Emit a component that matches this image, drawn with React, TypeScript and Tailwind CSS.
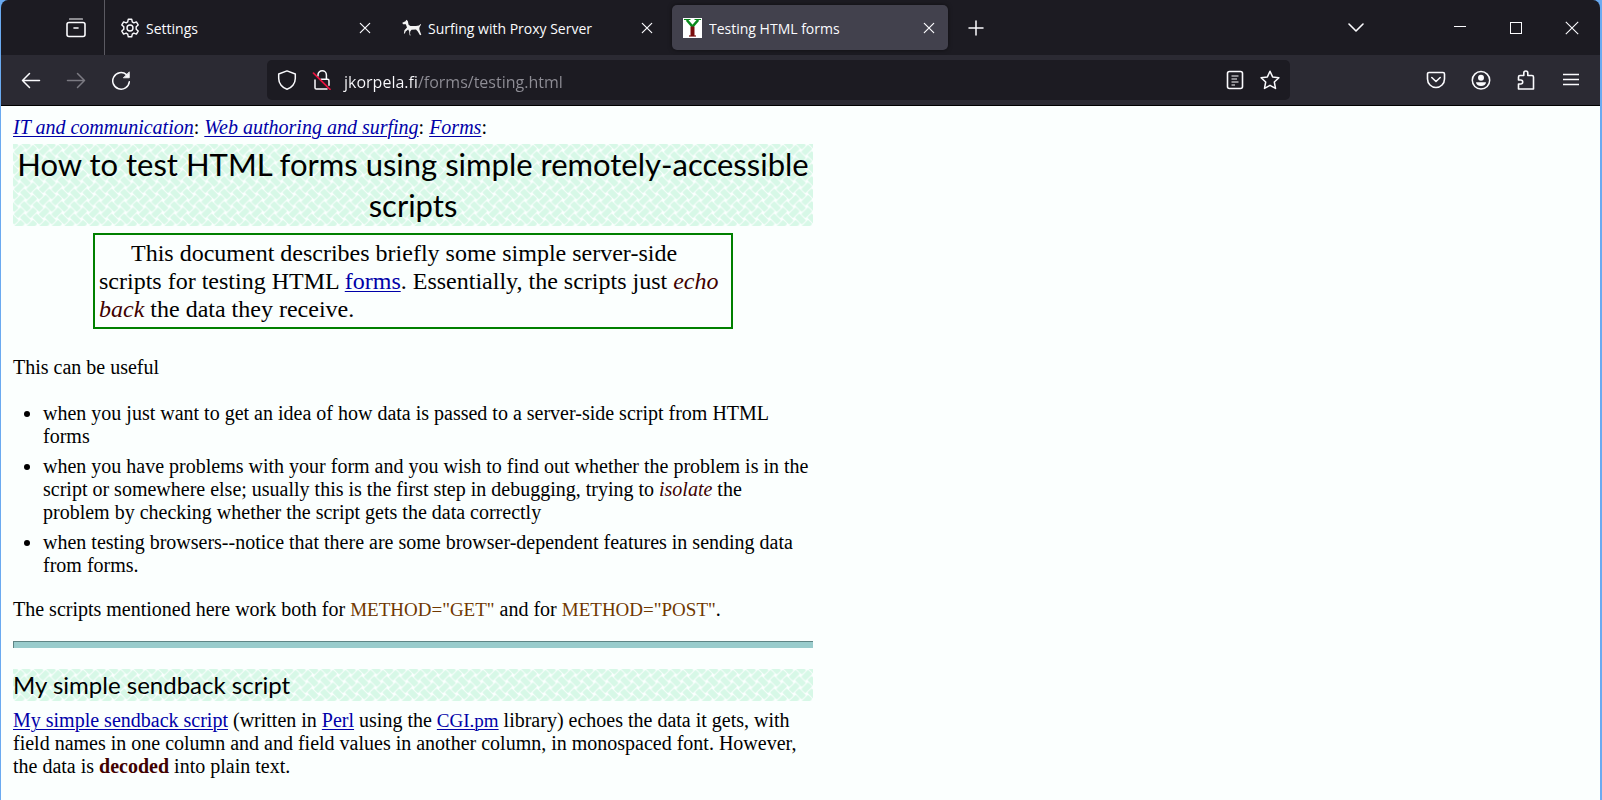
import type { ReactNode, SVGProps } from "react";

const UI_FONT = "font-['Open_Sans','Noto_Sans',sans-serif]";

function Icon({ children, ...rest }: SVGProps<SVGSVGElement>) {
  return (
    <svg
      width="20"
      height="20"
      viewBox="0 0 20 20"
      fill="none"
      stroke="currentColor"
      strokeWidth="1.5"
      strokeLinecap="round"
      strokeLinejoin="round"
      aria-hidden="true"
      {...rest}
    >
      {children}
    </svg>
  );
}

const GearIcon = () => (
  <Icon className="shrink-0" strokeWidth="1.4">
    <circle cx="10" cy="10" r="3" />
    <path d="M8.3 1.2h3.4l.6 2.7 1.5.9 2.6-.9 1.8 3-2 1.9v2.4l2 1.9-1.8 3-2.6-.9-1.5.9-.6 2.7H8.3l-.6-2.7-1.5-.9-2.6.9-1.8-3 2-1.9V8.8l-2-1.9 1.8-3 2.6.9 1.5-.9z" />
  </Icon>
);

const DogIcon = () => (
  <Icon className="shrink-0" stroke="none" fill="#f4f4f4">
    <path d="M.3 4.800 3.500 3.200 4.300 1.800 5.800 3l.8 3.700 1.800 1.300h5.600L17 7.500l1.600-1.500.5.6-1.500 2.300-.3 2.200.5 1.700 1.500 4-1.300.4-2.200-3.600-1.800-2-4.500.2-1.300 1.800-.2 2.600 1.100 1H7.600l-.4-3.800-1-1.800-2.600 1.800-.7 2.200-1-.2.5-3.100L5 9.600 3.800 6.200 1 6.300z" />
  </Icon>
);

const YIcon = () => (
  <svg width="19" height="20" viewBox="0 0 19 20" className="shrink-0" aria-hidden="true">
    <rect width="19" height="20" fill="#fff" />
    <path d="M1 1.500h6.500M11.500 1.500H18" stroke="#0a8a1c" strokeWidth="1.200" />
    <path d="M3.800 2 9.500 8.500 15.200 2" stroke="#0a8a1c" strokeWidth="2.600" fill="none" />
    <path d="M9.500 8.500V18" stroke="#7a0c0c" strokeWidth="4" />
    <path d="M6 18h7" stroke="#7a0c0c" strokeWidth="1.200" />
  </svg>
);

const CloseIcon = () => (
  <Icon width="12" height="12" viewBox="0 0 12 12" strokeWidth="1.200">
    <path d="M1.300 1.300 10.700 10.700M10.700 1.300 1.300 10.700" />
  </Icon>
);

function Tab({ icon, title, active = false }: { icon: ReactNode; title: string; active?: boolean }) {
  return (
    <div
      role="tab"
      aria-selected={active}
      className={
        active
          ? "flex h-[45px] w-[276px] min-w-0 items-center gap-[7px] rounded-[5px] bg-[#42414d] pr-[9px] pl-[11px] shadow-[0_0_4px_rgba(0,0,0,0.5)]"
          : "flex h-[45px] w-[276px] min-w-0 items-center gap-[6px] rounded-[5px] pr-[9px] pl-3"
      }
    >
      {icon}
      <span className="min-w-0 flex-1 truncate pt-0.5 text-sm">{title}</span>
      <button type="button" aria-label={"Close " + title} className="flex h-5 w-5 items-center justify-center">
        <CloseIcon />
      </button>
    </div>
  );
}

function ToolButton({ label, children, dim = false }: { label: string; children: ReactNode; dim?: boolean }) {
  return (
    <button
      type="button"
      aria-label={label}
      disabled={dim}
      className={
        dim
          ? "flex h-10 w-[45px] shrink-0 items-center justify-center text-[#7b7a82]"
          : "flex h-10 w-[45px] shrink-0 items-center justify-center"
      }
    >
      {children}
    </button>
  );
}

function UrlButton({ label, children }: { label: string; children: ReactNode }) {
  return (
    <button type="button" aria-label={label} className="flex h-10 w-[35px] shrink-0 items-center justify-center">
      {children}
    </button>
  );
}

function TabBar() {
  return (
    <div className="flex h-[55px] items-center bg-[#1c1b22]">
      <div className="flex h-full w-[104px] shrink-0 items-center justify-end border-r border-[#5b5a62] pr-4">
        <button type="button" aria-label="View tabs" className="flex h-6 w-6 items-center justify-center">
          <Icon strokeWidth="1.600">
            <path d="M3.500 1h13" strokeWidth="1.200" />
            <rect x="1" y="4.500" width="18" height="14" rx="2" />
            <path d="M8 10h4" />
          </Icon>
        </button>
      </div>
      <div role="tablist" aria-label="Open tabs" className="ml-[3px] flex min-w-0 gap-[6px]">
        <Tab icon={<GearIcon />} title="Settings" />
        <Tab icon={<DogIcon />} title="Surfing with Proxy Server" />
        <Tab icon={<YIcon />} title="Testing HTML forms" active />
      </div>
      <button type="button" aria-label="New tab" className="ml-2 flex h-10 w-10 shrink-0 items-center justify-center">
        <Icon width="16" height="16" viewBox="0 0 16 16">
          <path d="M8 1v14M1 8h14" />
        </Icon>
      </button>
      <div className="ml-auto flex shrink-0 items-center">
        <button type="button" aria-label="List all tabs" className="mr-12 flex h-10 w-14 items-center justify-center">
          <Icon width="16" height="16" viewBox="0 0 16 16" strokeWidth="1.600">
            <path d="m1 4 7 7 7-7" />
          </Icon>
        </button>
        <button type="button" aria-label="Minimize" className="flex h-10 w-14 items-center justify-center">
          <svg width="12" height="12" viewBox="0 0 12 12" aria-hidden="true">
            <path d="M0 4.500h12" stroke="currentColor" />
          </svg>
        </button>
        <button type="button" aria-label="Maximize" className="flex h-10 w-14 items-center justify-center">
          <svg width="12" height="12" viewBox="0 0 12 12" aria-hidden="true">
            <rect x=".5" y=".5" width="11" height="11" fill="none" stroke="currentColor" />
          </svg>
        </button>
        <button type="button" aria-label="Close window" className="flex h-10 w-14 items-center justify-center">
          <svg width="14" height="14" viewBox="0 0 14 14" aria-hidden="true">
            <path d="m.8.8 12.400 12.400M13.200.8.8 13.200" stroke="currentColor" strokeWidth="1.100" />
          </svg>
        </button>
      </div>
    </div>
  );
}

function Toolbar() {
  return (
    <div className="flex h-[51px] items-center border-b border-black bg-[#2b2a33] px-[7px]">
      <ToolButton label="Back">
        <Icon>
          <path d="M18.500 10.500H1.500M8.500 3.500l-7 7 7 7" />
        </Icon>
      </ToolButton>
      <ToolButton label="Forward" dim>
        <Icon>
          <path d="M1.500 10.500h17M11.500 3.500l7 7-7 7" />
        </Icon>
      </ToolButton>
      <ToolButton label="Reload">
        <Icon>
          <path d="M18.300 11.800A8.300 8.300 0 1 1 15.500 4.600" />
          <path d="M18.300 2.200v5.600h-5.600z" fill="currentColor" strokeWidth=".8" />
        </Icon>
      </ToolButton>
      <div className="mr-[123px] ml-[124px] flex h-10 min-w-0 flex-1 items-center rounded-[5px] bg-[#1c1b22] pr-[3px] pl-[2px]">
        <UrlButton label="Tracking protection">
          <Icon>
            <path d="M10 .9 18.300 4v4.500c0 5-3.600 9.300-8.300 10.700-4.700-1.400-8.300-5.700-8.300-10.700V4z" />
          </Icon>
        </UrlButton>
        <UrlButton label="Connection is not secure">
          <Icon>
            <path d="M6 6V5a4.200 4.200 0 0 1 8.400 0v4.300M9 9.300h6.500a1.500 1.500 0 0 1 1.500 1.500v4.500M3 10v7.700c0 .8.6 1.300 1.300 1.300H15" />
            <path d="M1.500 3.200 18 19.300" stroke="#e8123f" strokeWidth="1.700" />
          </Icon>
        </UrlButton>
        <input
          type="text"
          aria-label="Address"
          defaultValue="jkorpela.fi/forms/testing.html"
          className="h-10 min-w-0 flex-1 bg-[linear-gradient(90deg,#fbfbfe_79px,#8f8e96_79px)] bg-clip-text pt-[3px] pl-[5px] text-base text-transparent outline-none"
        />
        <UrlButton label="Reader view">
          <Icon strokeWidth="1.600">
            <rect x="2.500" y="1.500" width="15" height="17" rx="2" />
            <path d="M6.500 6h7M6.500 9h5.500M6.500 12h7M6.500 15h3.500" strokeWidth="1.200" strokeLinecap="butt" />
          </Icon>
        </UrlButton>
        <UrlButton label="Bookmark this page">
          <Icon>
            <path d="m10 1.200 2.600 5.700 6.300.8-4.600 4.300 1.200 6.400-5.500-3.100-5.500 3.100L5.700 12 1.100 7.700l6.300-.8z" />
          </Icon>
        </UrlButton>
      </div>
      <ToolButton label="Save to Pocket">
        <Icon strokeWidth="1.600">
          <path d="M3 2.500h14a1.500 1.500 0 0 1 1.500 1.500v5a8.500 8.500 0 0 1-17 0V4A1.500 1.500 0 0 1 3 2.500z" />
          <path d="m5.800 7.500 4.200 4 4.200-4" />
        </Icon>
      </ToolButton>
      <ToolButton label="Account">
        <Icon>
          <circle cx="10" cy="10.300" r="8.700" />
          <circle cx="10" cy="7.800" r="3" fill="currentColor" stroke="none" />
          <path d="M5 12.300h10c0 2.200-2.200 3.700-5 3.700s-5-1.500-5-3.700z" fill="currentColor" stroke="none" />
        </Icon>
      </ToolButton>
      <ToolButton label="Extensions">
        <Icon strokeWidth="1.600">
          <path d="M2.500 8.500V7A1.500 1.500 0 0 1 4 5.500h3.800V3a2 2 0 0 1 4 0v2.500H16A1.500 1.500 0 0 1 17.500 7v12h-15v-5h2.200a2 2 0 0 0 0-4H2.500z" />
        </Icon>
      </ToolButton>
      <ToolButton label="Open application menu">
        <svg width="16" height="14" viewBox="0 0 16 14" aria-hidden="true">
          <path d="M0 1.500h16M0 6.500h16M0 11.500h16" stroke="currentColor" strokeWidth="1.400" />
        </svg>
      </ToolButton>
    </div>
  );
}

const BRICKS = [
  { x: 0, y: 0, turn: 45 },
  { x: 12.5, y: 0, turn: 45 },
  { x: 0, y: 12.5, turn: 45 },
  { x: 12.5, y: 12.5, turn: 45 },
  { x: 6.25, y: 6.25, turn: -45 },
];

function Weave({ id }: { id: string }) {
  return (
    <svg className="absolute inset-0 -z-10 h-full w-full" aria-hidden="true">
      <defs>
        <pattern id={id} width="12.5" height="12.5" patternUnits="userSpaceOnUse">
          <rect width="12.5" height="12.5" fill="#fbfffe" />
          {BRICKS.map((b) => (
            <rect
              key={b.x + "-" + b.y}
              x="-4.9"
              y="-3"
              width="9.8"
              height="6"
              rx="1"
              fill="#d7f8e7"
              transform={"translate(" + b.x + " " + b.y + ") rotate(" + b.turn + ")"}
            />
          ))}
        </pattern>
      </defs>
      <rect width="100%" height="100%" fill={"url(#" + id + ")"} />
    </svg>
  );
}

function Link({ children }: { children: ReactNode }) {
  return (
    <a href="#" className="text-[#0000a8] underline decoration-1 underline-offset-2">
      {children}
    </a>
  );
}

function Code({ children }: { children: ReactNode }) {
  return <code className="font-['Liberation_Serif',serif] text-[19px]">{children}</code>;
}

function Article() {
  return (
    <main className="flex-1 bg-[#fbfffe] pt-[10px] pb-[22px] pl-3 font-['Liberation_Serif',serif] text-xl leading-[23px] text-black">
      <div className="max-w-[800px]">
        <nav aria-label="Breadcrumb">
          <i><Link>IT and communication</Link></i>: <i><Link>Web authoring and surfing</Link></i>: <i><Link>Forms</Link></i>:
        </nav>
        <h1 className="relative isolate mt-[5px] text-center font-[Lato,sans-serif] text-[31px] leading-[41px]">
          <Weave id="weave-title" />
          How to test HTML forms using simple remotely-accessible scripts
        </h1>
        <p className="mx-20 mt-[7px] border-2 border-[#008000] p-1 indent-8 text-2xl leading-7">
          This document describes briefly some simple server-side scripts for testing HTML <Link>forms</Link>.
          Essentially, the scripts just <em className="text-[#400000]">echo back</em> the data they receive.
        </p>
        <p className="mt-[27px]">This can be useful</p>
        <ul className="mt-[23px] flex list-disc flex-col gap-[7px] pl-[30px]">
          <li>when you just want to get an idea of how data is passed to a server-side script from HTML forms</li>
          <li>
            when you have problems with your form and you wish to find out whether the problem is in the script or
            somewhere else; usually this is the first step in debugging, trying to{" "}
            <em className="text-[#400000]">isolate</em> the problem by checking whether the script gets the data
            correctly
          </li>
          <li>
            when testing browsers--notice that there are some browser-dependent features in sending data from forms.
          </li>
        </ul>
        <p className="mt-[21px]">
          The scripts mentioned here work both for{" "}
          <span className="text-[#703800]"><Code>METHOD="GET"</Code></span> and for{" "}
          <span className="text-[#703800]"><Code>METHOD="POST"</Code></span>.
        </p>
        <hr className="mt-5 h-[7px] border-0 border-t border-l border-[#5f8585] bg-[#99cccc]" />
        <h2 className="relative isolate mt-[21px] font-[Lato,sans-serif] text-2xl leading-8">
          <Weave id="weave-section" />
          My simple sendback script
        </h2>
        <p className="mt-2">
          <Link>My simple sendback script</Link> (written in <Link>Perl</Link> using the{" "}
          <Link><Code>CGI.pm</Code></Link> library) echoes the data it gets, with field names in one column and and
          field values in another column, in monospaced font. However, the data is{" "}
          <strong className="text-[#400000]">decoded</strong> into plain text.
        </p>
      </div>
    </main>
  );
}

export default function App() {
  return (
    <div className="min-h-screen bg-[#6aaaf0] pr-px">
      <div className="flex min-h-screen flex-col overflow-hidden rounded-t-lg border-x border-[#6aaaf0]">
        <header className={UI_FONT + " text-[#fbfbfe]"}>
          <TabBar />
          <Toolbar />
        </header>
        <Article />
      </div>
    </div>
  );
}
